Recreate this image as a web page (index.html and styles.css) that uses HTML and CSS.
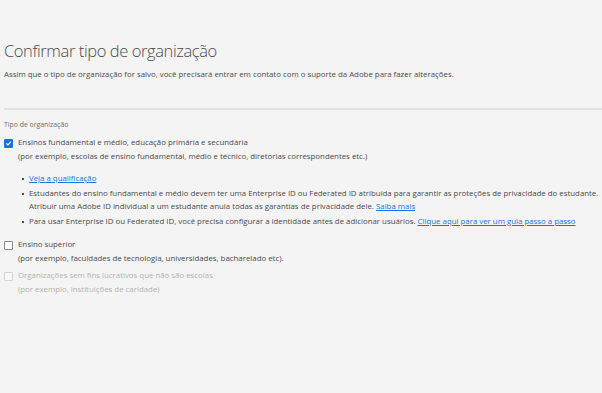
FILE: index.html
```html
<!DOCTYPE html>
<html lang="pt-BR">
<head>
<meta charset="utf-8">
<link rel="stylesheet" href="styles.css">
</head>
<body>
<main class="page">
  <h1 class="title">Confirmar tipo de organização</h1>
  <p class="subtitle">Assim que o tipo de organização for salvo, você precisará entrar em contato com o suporte da Adobe para fazer alterações.</p>
  <div class="divider"></div>
  <div class="group-label">Tipo de organização</div>
  <div class="option">
    <span class="box checked">
      <svg viewBox="0 0 10 10" width="9" height="9"><path d="M2.2 5.2 L4.2 7.1 L7.9 2.9" fill="none" stroke="#fff" stroke-width="1.6" stroke-linecap="round" stroke-linejoin="round"/></svg>
    </span>
    <div class="opt-text">
      <div>Ensinos fundamental e médio, educação primária e secundária</div>
      <div>(por exemplo, escolas de ensino fundamental, médio e técnico, diretorias correspondentes etc.)</div>
    </div>
  </div>
  <ul class="notes">
    <li><a href="#">Veja a qualificação</a></li>
    <li>Estudantes do ensino fundamental e médio devem ter uma Enterprise ID ou Federated ID atribuída para garantir as proteções de privacidade do estudante. Atribuir uma Adobe ID individual a um estudante anula todas as garantias de privacidade dele. <a href="#">Saiba mais</a></li>
    <li>Para usar Enterprise ID ou Federated ID, você precisa configurar a identidade antes de adicionar usuários. <a href="#">Clique aqui para ver um guia passo a passo</a></li>
  </ul>
  <div class="option second">
    <span class="box"></span>
    <div class="opt-text">
      <div>Ensino superior</div>
      <div>(por exemplo, faculdades de tecnologia, universidades, bacharelado etc).</div>
    </div>
  </div>
  <div class="option disabled">
    <span class="box"></span>
    <div class="opt-text">
      <div>Organizações sem fins lucrativos que não são escolas</div>
      <div>(por exemplo, instituições de caridade)</div>
    </div>
  </div>
</main>
</body>
</html>
```
FILE: styles.css
```css
html, body {
  margin: 0;
  padding: 0;
  background: #f4f4f4;
}
body {
  font-family: "Open Sans", "Noto Sans", sans-serif;
  color: #4b4b4b;
  width: 602px;
  height: 393px;
  overflow: hidden;
}
.page {
  padding: 39px 0 0 4px;
}
.title {
  margin: 0;
  font-size: 16.5px;
  font-weight: 300;
  line-height: 24px;
  color: #4b4b4b;
  letter-spacing: -0.4px;
}
.subtitle {
  margin: 5px 0 0;
  font-size: 7.85px;
  line-height: 13px;
  color: #4b4b4b;
}
.divider {
  margin-top: 27px;
  height: 2px;
  background: #e2e2e2;
}
.group-label {
  margin-top: 9px;
  font-size: 6.9px;
  line-height: 12px;
  color: #6e6e6e;
}
.option {
  display: flex;
  align-items: flex-start;
  gap: 5px;
  margin-top: 5px;
  font-size: 7.85px;
  line-height: 13.5px;
}
.box {
  flex: none;
  width: 7px;
  height: 7px;
  border: 1px solid #8a8a8a;
  border-radius: 1px;
  background: #fff;
  margin-top: 3px;
  display: flex;
  align-items: center;
  justify-content: center;
}
.box.checked {
  background: #1473e6;
  border-color: #1473e6;
}
.box.checked svg {
  display: block;
}
.notes {
  margin: 9px 0 0;
  padding: 0 0 0 25px;
  font-size: 7.85px;
  line-height: 13.5px;
  list-style: none;
}
.notes li {
  position: relative;
  margin-bottom: 1px;
}
.notes li::before {
  content: "";
  position: absolute;
  left: -7px;
  top: 6px;
  width: 2px;
  height: 2px;
  background: #4b4b4b;
}
.notes a {
  color: #1473e6;
  text-decoration: underline;
}
.option.second {
  margin-top: 10px;
}
.option.disabled {
  margin-top: 4px;
  color: #b3b3b3;
}
.option.disabled .box {
  border-color: #d3d3d3;
  background: #f8f8f8;
}
```
